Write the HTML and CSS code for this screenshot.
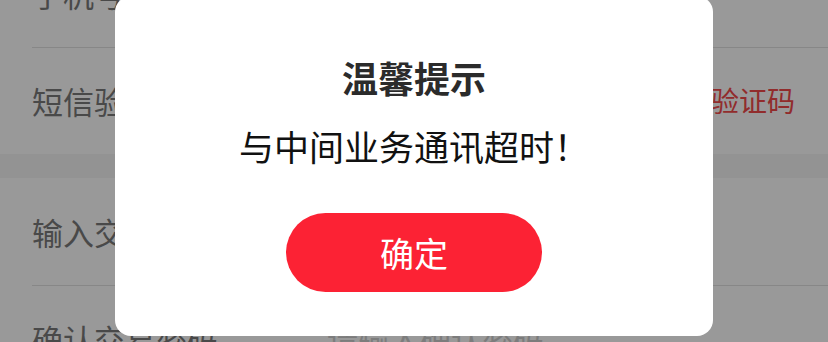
FILE: index.html
```html
<!DOCTYPE html>
<html lang="zh-CN">
<head>
<meta charset="utf-8">
<title>温馨提示</title>
<link rel="stylesheet" href="styles.css">
</head>
<body>
<main class="form">
  <section class="group">
    <div class="row">
      <span class="label">手机号</span>
      <span class="placeholder">请输入手机号</span>
    </div>
    <div class="row">
      <span class="label">短信验证码</span>
      <span class="placeholder">请输入验证码</span>
      <span class="action">获取验证码</span>
    </div>
  </section>
  <section class="group">
    <div class="row">
      <span class="label">输入交易密码</span>
      <span class="placeholder">请输入交易密码</span>
    </div>
    <div class="row">
      <span class="label">确认交易密码</span>
      <span class="placeholder">请输入确认密码</span>
    </div>
  </section>
</main>
<div class="overlay">
  <div class="dialog">
    <h2 class="dialog-title">温馨提示</h2>
    <p class="dialog-msg">与中间业务通讯超时！</p>
    <button class="dialog-btn">确定</button>
  </div>
</div>
</body>
</html>
```
FILE: styles.css
```css
html, body {
  margin: 0;
  padding: 0;
  background: #f5f5f5;
  font-family: "Noto Sans CJK SC", "Noto Sans", sans-serif;
  overflow: hidden;
  height: 342px;
}
.form {
  margin-top: -60px;
}
.group {
  background: #ffffff;
  padding-left: 32px;
}
.group + .group {
  margin-top: 24px;
}
.row {
  height: 106px;
  display: flex;
  align-items: center;
  padding-right: 33px;
  box-sizing: border-box;
}
.row:first-child {
  border-bottom: 1px solid #e2e2e2;
  height: 108px;
}
.label {
  width: 295px;
  flex: none;
  font-size: 31px;
  color: #7a7a7a;
  line-height: 1.2;
}
.placeholder {
  flex: 1;
  font-size: 31px;
  color: #cfcfcf;
  line-height: 1.2;
}
.action {
  font-size: 28px;
  color: #f24a4a;
  line-height: 1.2;
}
.overlay {
  position: fixed;
  inset: 0;
  background: rgba(0, 0, 0, 0.4);
  display: flex;
  justify-content: center;
  align-items: flex-start;
}
.dialog {
  margin-top: -4px;
  width: 598px;
  height: 340px;
  box-sizing: border-box;
  background: #ffffff;
  border-radius: 16px;
  padding-top: 59px;
  display: flex;
  flex-direction: column;
  align-items: center;
}
.dialog-title {
  margin: 0;
  font-size: 36px;
  font-weight: 700;
  line-height: 44px;
  color: #2b2b2b;
}
.dialog-msg {
  margin: 25px 0 0;
  font-size: 35px;
  line-height: 44px;
  color: #111111;
}
.dialog-btn {
  margin-top: 45px;
  width: 256px;
  height: 79px;
  border: none;
  border-radius: 40px;
  background: #fc2234;
  color: #ffffff;
  font-family: inherit;
  font-size: 34px;
  line-height: 1;
  padding: 0;
}
```
